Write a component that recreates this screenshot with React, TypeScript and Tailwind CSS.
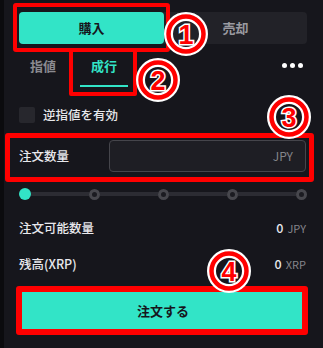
import React from "react";

const FONT = "font-['Noto_Sans_CJK_JP','Noto_Sans',sans-serif]";

const Marker = ({ n, className }: { n: number; className: string }) => (
  <svg
    viewBox="0 0 44 44"
    className={`absolute h-[44px] w-[44px] ${className}`}
  >
    <circle cx="22" cy="22" r="17.5" fill="none" stroke="#fff" strokeWidth="9" />
    <circle cx="22" cy="22" r="17.5" fill="none" stroke="#ff0000" strokeWidth="4.5" />
    <text
      x="22"
      y="31.5"
      textAnchor="middle"
      fontSize="27"
      fontWeight="700"
      fontFamily="'Liberation Sans', Arial, sans-serif"
      fill="#ff0000"
      stroke="#fff"
      strokeWidth="3"
      paintOrder="stroke"
    >
      {n}
    </text>
  </svg>
);

const HollowDot = () => (
  <div className="h-[11px] w-[11px] shrink-0 rounded-full border-[3px] border-[#47474d] bg-[#1b1b21]" />
);

const Track = () => <div className="h-[4px] flex-1 bg-[#2c2c33]" />;

export default function App() {
  return (
    <div
      className={`relative flex h-[348px] w-[323px] overflow-hidden bg-[#16161c] ${FONT}`}
    >
      <div className="w-[4px] shrink-0 bg-[#0b0b0e]" />
      <div className="flex flex-1 flex-col pl-[15px] pr-[16px] pt-[12px]">
        {/* buy / sell */}
        <div className="flex h-[32px] rounded-[4px] bg-[#222228]">
          <button className="w-[145px] rounded-[4px] bg-[#32e4c7] text-[13px] font-bold text-[#16161c]">
            購入
          </button>
          <button className="flex-1 text-[13px] font-bold text-[#9a9aa0]">
            売却
          </button>
        </div>

        {/* tabs */}
        <div className="flex h-[43px] items-start">
          <div className="flex h-full w-[48px] flex-col items-center">
            <span className="mt-[13px] text-[13px] font-bold leading-[18px] text-[#8a8a90]">
              指値
            </span>
          </div>
          <div className="ml-[13px] flex h-full w-[48px] flex-col items-center">
            <span className="mt-[13px] text-[13px] font-bold leading-[18px] text-[#32e4c7]">
              成行
            </span>
            <div className="mt-auto h-[2px] w-full bg-[#32e4c7]" />
          </div>
          <div className="ml-auto mr-[4px] mt-[19px] flex gap-[3px]">
            <span className="h-[5px] w-[5px] rounded-full bg-white" />
            <span className="h-[5px] w-[5px] rounded-full bg-white" />
            <span className="h-[5px] w-[5px] rounded-full bg-white" />
          </div>
        </div>

        {/* stop order */}
        <div className="mt-[20px] flex items-center gap-[8px]">
          <div className="h-[16px] w-[16px] rounded-[2px] bg-[#27272d]" />
          <span className="text-[12.5px] font-medium leading-[16px] text-[#e8e8ec]">
            逆指値を有効
          </span>
        </div>

        {/* quantity */}
        <div className="mt-[17px] flex items-center">
          <span className="w-[90px] text-[12.5px] font-medium text-[#e8e8ec]">
            注文数量
          </span>
          <div className="mr-[1px] flex h-[32px] flex-1 items-center justify-end rounded-[4px] border border-[#45454b] bg-[#1e1e24] pr-[12px]">
            <span className="text-[12px] text-[#85858b]">JPY</span>
          </div>
        </div>

        {/* slider */}
        <div className="mt-[16px] flex h-[12px] items-center">
          <div className="h-[12px] w-[12px] shrink-0 rounded-full bg-[#32e4c7]" />
          <Track />
          <HollowDot />
          <Track />
          <HollowDot />
          <Track />
          <HollowDot />
          <Track />
          <HollowDot />
        </div>

        {/* available */}
        <div className="mt-[19px] flex h-[18px] items-center justify-between">
          <span className="text-[12.5px] font-medium text-[#e8e8ec]">
            注文可能数量
          </span>
          <span className="flex items-baseline gap-[4px] pr-[1px]">
            <span className="text-[12.5px] font-medium text-[#e8e8ec]">0</span>
            <span className="text-[11px] text-[#85858b]">JPY</span>
          </span>
        </div>

        {/* balance */}
        <div className="mt-[18px] flex h-[18px] items-center justify-between">
          <span className="text-[12.5px] font-medium text-[#e8e8ec]">
            残高(XRP)
          </span>
          <span className="flex items-baseline gap-[4px] pr-[1px]">
            <span className="text-[12.5px] font-medium text-[#e8e8ec]">0</span>
            <span className="text-[11px] text-[#85858b]">XRP</span>
          </span>
        </div>

        <button className="mt-[17px] h-[42px] w-full rounded-[4px] bg-[#32e4c7] text-[13px] font-bold text-[#16161c]">
          注文する
        </button>
      </div>

      {/* annotations */}
      <div className="absolute left-[13px] top-[3px] h-[49px] w-[157px] rounded-[3px] border-4 border-[#ff0000]" />
      <div className="absolute left-[69px] top-[48px] h-[48px] w-[68px] rounded-[2px] border-4 border-[#ff0000]" />
      <div className="absolute left-[5px] top-[133px] h-[49px] w-[309px] rounded-[3px] border-[5px] border-[#ff0000]" />
      <div className="absolute left-[16px] top-[286px] h-[49px] w-[292px] rounded-[3px] border-[6px] border-[#ff0000]" />
      <Marker n={1} className="left-[164px] top-[12px]" />
      <Marker n={2} className="left-[136px] top-[58px]" />
      <Marker n={3} className="left-[267px] top-[95px]" />
      <Marker n={4} className="left-[207px] top-[249px]" />
    </div>
  );
}
